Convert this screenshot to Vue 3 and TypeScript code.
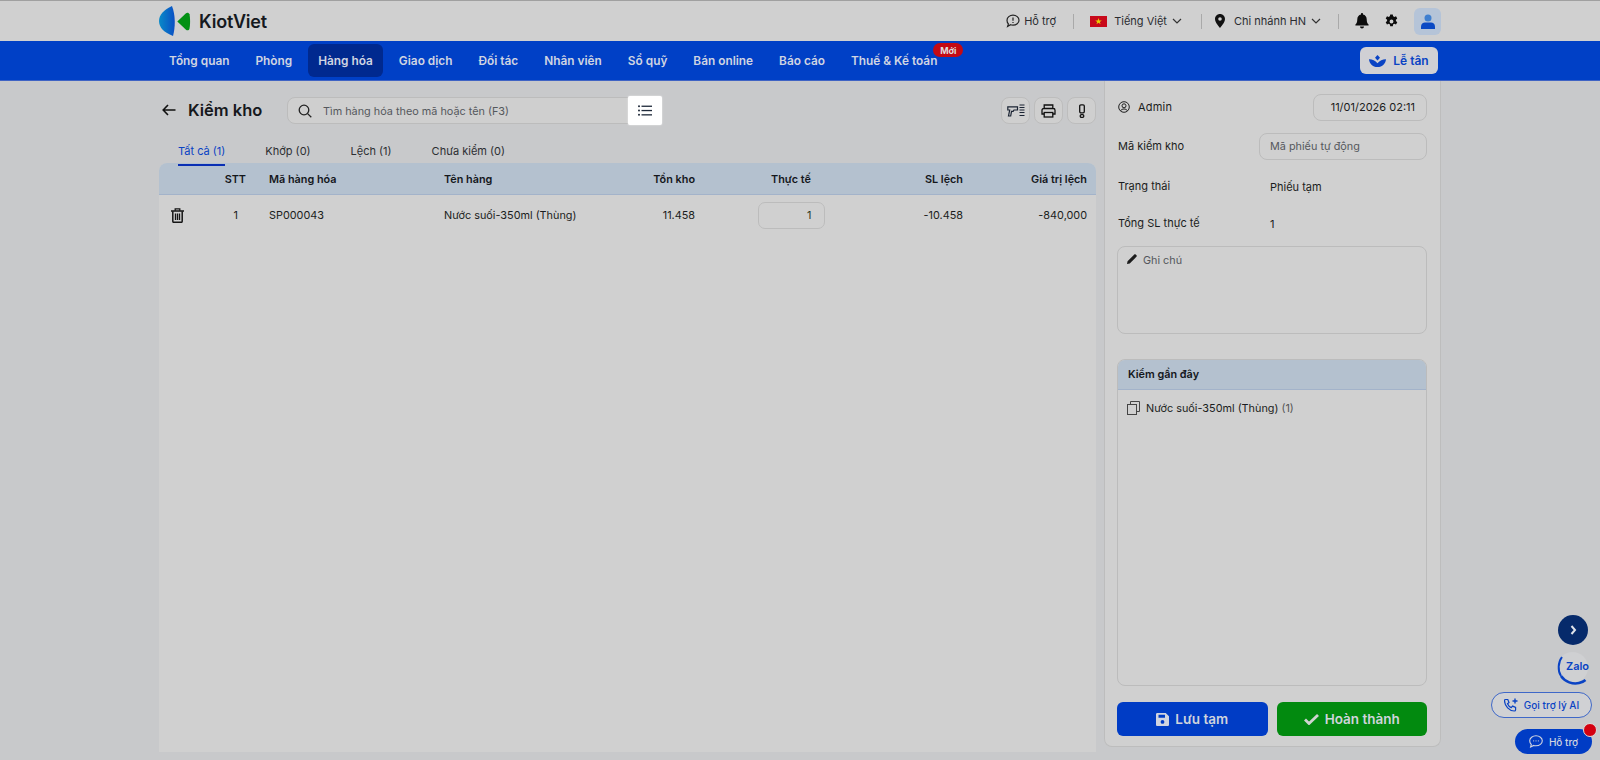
<script setup lang="ts">
const navItems = ['Tổng quan', 'Phòng', 'Hàng hóa', 'Giao dịch', 'Đối tác', 'Nhân viên', 'Sổ quỹ', 'Bán online', 'Báo cáo', 'Thuế & Kế toán']
const tabs = ['Tất cả (1)', 'Khớp (0)', 'Lệch (1)', 'Chưa kiểm (0)']
</script>

<template>
  <div class="page">
    <!-- top bar -->
    <header class="topbar">
      <div class="wrap topbar-inner">
        <div class="logo">
          <svg width="32" height="32" viewBox="0 0 32 32">
            <defs>
              <linearGradient id="lg" x1="0" y1="0" x2="1" y2="0">
                <stop offset="0" stop-color="#0a8ac8" />
                <stop offset="1" stop-color="#0a4fc4" />
              </linearGradient>
            </defs>
            <path d="M13 1C5 4.500 0 10 0 16c0 6.500 5 11.500 14 15 2.500-9 2.500-21-1-30z" fill="url(#lg)" />
            <path d="M18.300 16.500L27 8.300c1.200-1 3-.6 3.500 1 .8 4 .8 10.400 0 14.400-.5 1.600-2.300 2-3.500 1z" fill="#029014" />
          </svg>
          <span class="logo-text">KiotViet</span>
        </div>
        <div class="top-right">
          <div class="top-item support">
            <svg width="14" height="14" viewBox="0 0 14 14" fill="none" stroke="#222" stroke-width="1.200">
              <path d="M7 1.200c3.300 0 6 2.200 6 5s-2.700 5-6 5c-.9 0-1.700-.15-2.500-.45L1.600 12.500l.8-2.600C1.500 9 1 7.700 1 6.200c0-2.800 2.700-5 6-5z" />
              <path d="M7 3.500v3.300M7 8v1" />
            </svg>
            <span>Hỗ trợ</span>
          </div>
          <i class="sep"></i>
          <div class="top-item lang">
            <svg class="flag" width="17" height="11" viewBox="0 0 17 11">
              <rect width="17" height="11" fill="#c8091a" />
              <path d="M8.500 2l.8 2.400h2.500l-2 1.500.75 2.400-2.050-1.500-2.050 1.500.75-2.400-2-1.500h2.500z" fill="#e8d000" />
            </svg>
            <span>Tiếng Việt</span>
            <svg width="10" height="6" viewBox="0 0 10 6" fill="none" stroke="#333" stroke-width="1.200"><path d="M1 1l4 4 4-4" /></svg>
          </div>
          <i class="sep"></i>
          <div class="top-item branch">
            <svg width="10" height="14" viewBox="0 0 10 14">
              <path fill-rule="evenodd" d="M5 0C2.200 0 0 2.200 0 5c0 3.500 5 9 5 9s5-5.500 5-9c0-2.800-2.200-5-5-5zm0 3.200a1.800 1.800 0 110 3.600 1.800 1.800 0 010-3.600z" fill="#111" />
            </svg>
            <span>Chi nhánh HN</span>
            <svg width="10" height="6" viewBox="0 0 10 6" fill="none" stroke="#333" stroke-width="1.200"><path d="M1 1l4 4 4-4" /></svg>
          </div>
          <i class="sep"></i>
          <svg class="bell" width="14" height="16" viewBox="0 0 14 16">
            <path d="M7 0c-.6 0-1 .4-1 1v.6C3.700 2.100 2.300 4 2.300 6.200c0 3.100-.9 4.300-1.800 5.300-.4.400-.1 1 .4 1h12.200c.5 0 .8-.6.400-1-.9-1-1.800-2.200-1.800-5.300C11.700 4 10.300 2.100 8 1.600V1c0-.6-.4-1-1-1zM5 13.500c0 1.100.9 2 2 2s2-.9 2-2z" fill="#0c0c0c" />
          </svg>
          <svg class="gear" width="15" height="15" viewBox="0 0 14 14">
            <path fill-rule="evenodd" d="M5.800.5h2.400l.3 1.700c.4.150.8.350 1.100.6l1.600-.6 1.200 2.100-1.300 1.100a4.500 4.500 0 010 1.200l1.300 1.100-1.200 2.100-1.600-.6c-.3.250-.7.450-1.100.6l-.3 1.700H5.800l-.3-1.700a4.500 4.500 0 01-1.100-.6l-1.600.6-1.200-2.100 1.300-1.100a4.500 4.500 0 010-1.200L1.600 4.300l1.200-2.100 1.600.6c.3-.25.700-.45 1.100-.6zM7 5.200a1.800 1.800 0 100 3.600 1.800 1.800 0 000-3.600z" fill="#0c0c0c" />
          </svg>
          <div class="avatar">
            <svg width="14" height="15" viewBox="0 0 14 15">
              <circle cx="7" cy="4" r="3.500" fill="#3f7fd0" />
              <path d="M0 15v-2.500C0 10 2 8.500 4 8.500h6c2 0 4 1.500 4 4V15z" fill="#0a49c4" />
            </svg>
          </div>
        </div>
      </div>
    </header>

    <!-- main nav -->
    <nav class="mainnav">
      <div class="wrap nav-inner">
        <div class="nav-list">
          <a v-for="item in navItems" :key="item" class="nav-item" :class="{ active: item === 'Hàng hóa' }">
            {{ item }}
            <span v-if="item === 'Thuế & Kế toán'" class="badge-new">Mới</span>
          </a>
        </div>
        <button class="reception">
          <svg width="17" height="12" viewBox="0 0 17 12">
            <path d="M8.500 0l2.500 2.700-2.500 2.800L6 2.700z" fill="#0a43c4" />
            <path d="M0 4.200c2.800-.2 6.200 1.300 8.500 4 2.300-2.700 5.700-4.200 8.500-4-.3 4.200-3.600 7.800-8.500 7.800S.3 8.400 0 4.200z" fill="#0a43c4" />
          </svg>
          <span>Lễ tân</span>
        </button>
      </div>
    </nav>

    <div class="wrap content">
      <!-- left column -->
      <main class="left">
        <div class="toolbar">
          <svg class="back" width="14" height="12" viewBox="0 0 14 12" fill="none" stroke="#111" stroke-width="1.600">
            <path d="M13.500 6H1.500M6 1L1.200 6 6 11" />
          </svg>
          <h1 class="title">Kiểm kho</h1>
          <div class="search">
            <svg width="14" height="14" viewBox="0 0 14 14" fill="none" stroke="#222" stroke-width="1.300">
              <circle cx="6" cy="6" r="4.800" /><path d="M9.600 9.600L13.300 13.300" />
            </svg>
            <span>Tìm hàng hóa theo mã hoặc tên (F3)</span>
            <div class="list-btn">
              <svg width="14" height="11" viewBox="0 0 14 11" fill="#1f2a3a">
                <circle cx="1" cy="1.200" r="1" /><circle cx="1" cy="5.500" r="1" /><circle cx="1" cy="9.800" r="1" />
                <rect x="3.500" y=".6" width="10.500" height="1.300" /><rect x="3.500" y="4.900" width="10.500" height="1.300" /><rect x="3.500" y="9.200" width="10.500" height="1.300" />
              </svg>
            </div>
          </div>
          <div class="tools">
            <button class="tool">
              <svg width="18" height="14" viewBox="0 0 18 14" fill="none" stroke="#1a2333" stroke-width="1.200">
                <path d="M.8 2.800h9.700v3.200H7l-.9 1.400H4.500L3.700 12H1.500l1.200-6H.8z" />
                <path d="M12.500 1h5M12.500 3.500h5M12.500 6h5M12.500 8.500h5M12.500 11.500h5" stroke-width="1" />
              </svg>
            </button>
            <button class="tool">
              <svg width="15" height="14" viewBox="0 0 15 14" fill="none" stroke="#111" stroke-width="1.300">
                <path d="M3.200 4.500V1h8.600v3.500M3.200 10H1V6.200c0-.9.800-1.700 1.700-1.700h9.600c.9 0 1.700.8 1.700 1.700V10h-2.200" />
                <rect x="3.200" y="8.500" width="8.600" height="4.500" />
              </svg>
            </button>
            <button class="tool">
              <svg width="8" height="14" viewBox="0 0 8 14" fill="none" stroke="#111" stroke-width="1.300">
                <rect x="1.700" y=".8" width="4.600" height="8" rx="1.200" />
                <rect x="2.200" y="10.700" width="3.600" height="2.600" rx="1.200" />
              </svg>
            </button>
          </div>
        </div>

        <div class="tabs">
          <a v-for="(tab, i) in tabs" :key="tab" class="tab" :class="{ on: i === 0 }">{{ tab }}</a>
        </div>

        <section class="table">
          <div class="tr head">
            <span></span>
            <span class="r">STT</span>
            <span>Mã hàng hóa</span>
            <span>Tên hàng</span>
            <span class="r">Tồn kho</span>
            <span class="c">Thực tế</span>
            <span class="r">SL lệch</span>
            <span class="r">Giá trị lệch</span>
          </div>
          <div class="tr row">
            <span class="trash">
              <svg width="13" height="15" viewBox="0 0 13 15" fill="none" stroke="#151515" stroke-width="1.300">
                <path d="M0 3h13" stroke-width="1.500" />
                <path d="M4.200 2.800V.8h4.600v2" />
                <path d="M1.800 3.200v10.100c0 .6.400 1 1 1h7.400c.6 0 1-.4 1-1V3.200" stroke-width="1.500" />
                <path d="M4.500 5.500v6.500M6.500 5.500v6.500M8.500 5.500v6.500" />
              </svg>
            </span>
            <span class="r stt">1</span>
            <span>SP000043</span>
            <span>Nước suối-350ml (Thùng)</span>
            <span class="r">11.458</span>
            <span class="c"><span class="qty">1</span></span>
            <span class="r">-10.458</span>
            <span class="r">-840,000</span>
          </div>
        </section>
      </main>

      <!-- right panel -->
      <aside class="panel">
        <div class="line admin">
          <div class="who">
            <svg width="12" height="12" viewBox="0 0 12 12" fill="none" stroke="#222" stroke-width="1">
              <circle cx="6" cy="6" r="5.300" /><circle cx="6" cy="4.800" r="2" /><path d="M2.500 9.800C3.300 8.500 4.500 8 6 8s2.700.5 3.500 1.800" />
            </svg>
            <span>Admin</span>
          </div>
          <div class="field date">11/01/2026 02:11</div>
        </div>
        <div class="line code">
          <label>Mã kiểm kho</label>
          <div class="field ph">Mã phiếu tự động</div>
        </div>
        <div class="line status">
          <label>Trạng thái</label>
          <span class="val">Phiếu tạm</span>
        </div>
        <div class="line total">
          <label>Tổng SL thực tế</label>
          <span class="val">1</span>
        </div>
        <div class="note">
          <svg width="10" height="10" viewBox="0 0 11 11"><path d="M0 11l.6-3L7.200 1.400l2.400 2.400L3 10.400zM8 .6c.5-.5 1.100-.5 1.500-.1l1 1c.4.400.4 1-.1 1.500l-.9.900L7.100 1.500z" fill="#1c1c1c" /></svg>
          <span>Ghi chú</span>
        </div>
        <section class="recent">
          <div class="recent-head">Kiểm gần đây</div>
          <div class="recent-item">
            <svg width="13" height="14" viewBox="0 0 13 14" fill="none" stroke="#444" stroke-width="1">
              <rect x=".5" y="3.500" width="9" height="10" /><path d="M3.500 3.500V.5h9v10h-3" />
            </svg>
            <span>Nước suối-350ml (Thùng)</span>
            <span class="count">(1)</span>
          </div>
        </section>
        <div class="actions">
          <button class="act save">
            <svg width="13" height="13" viewBox="0 0 13 13">
              <path fill-rule="evenodd" d="M1.300 0h8.400L13 3.300v8.400c0 .7-.6 1.300-1.300 1.300H1.300C.6 13 0 12.400 0 11.700V1.300C0 .6.600 0 1.300 0zM2.500 1.800v3h6.500v-3zM6.500 7a1.900 1.900 0 100 3.800 1.900 1.900 0 000-3.800z" fill="#d0d4e0" />
            </svg>
            Lưu tạm
          </button>
          <button class="act done">
            <svg width="15" height="11" viewBox="0 0 15 11" fill="none" stroke="#d0d4d0" stroke-width="2.800"><path d="M1 5.500l4 4 9-8.500" /></svg>
            Hoàn thành
          </button>
        </div>
      </aside>
    </div>

    <!-- floating widgets -->
    <div class="floats">
      <button class="fold">
        <svg width="7" height="10" viewBox="0 0 7 10" fill="none" stroke="#dfe3ea" stroke-width="2"><path d="M1.500 1l3.500 4-3.500 4" /></svg>
      </button>
      <div class="zalo">
        <svg class="zalo-ring" width="32" height="32" viewBox="0 0 32 32" fill="none" stroke="#0a43c4">
          <path d="M5 4C1 9 .5 18 4 23" stroke-width="2" />
          <path d="M4 23c4 6 12 8.500 18 7 3-.7 5-1.700 6.500-3" stroke-width="2.500" />
        </svg>
        <span>Zalo</span>
      </div>
      <button class="ai">
        <svg width="15" height="15" viewBox="0 0 15 15" fill="none" stroke="#0a43c4" stroke-width="1.200">
          <path d="M1.500 1.500h2.300l1.200 3-1.500 1.200c.7 1.700 2 3.100 3.800 3.900l1.300-1.500 3 1.300v2.300c0 .7-.6 1.300-1.300 1.300C5.500 13 .5 8 .5 2.500c0-.6.400-1 1-1z" />
          <path d="M11 .5v5M8.500 3h5" stroke-width="1.400" />
        </svg>
        Gọi trợ lý AI
      </button>
      <button class="help">
        <svg width="14" height="13" viewBox="0 0 14 13" fill="none" stroke="#d0d4e0" stroke-width="1.100">
          <path d="M7 .8c3.400 0 6.300 2.100 6.300 5s-2.900 5-6.300 5c-.8 0-1.600-.1-2.300-.35L1.600 12l.7-2.500C1.300 8.600.7 7.300.7 5.800c0-2.900 2.900-5 6.300-5z" />
          <path d="M4.300 5.800h.8M6.600 5.800h.8M8.900 5.800h.8" stroke-width="1.300" />
        </svg>
        Hỗ trợ
        <i class="dot"></i>
      </button>
    </div>
  </div>
</template>

<style>
html, body { margin: 0; background: #c8c9cb; overflow: hidden; }
</style>

<style scoped>
.page {
  position: relative;
  height: 760px;
  overflow: hidden;
  background: #c8c9cb;
  color: #1b1d20;
  font-family: Inter, "Noto Sans", "Liberation Sans", sans-serif;
  font-size: 11px;
}
.wrap { width: 1282px; margin: 0 auto; }
button { font-family: inherit; border: 0; padding: 0; cursor: pointer; }

.topbar { height: 41px; box-sizing: border-box; background: #d0d0d0; border-top: 1px solid #a0a0a0; }
.topbar-inner { display: flex; align-items: center; justify-content: space-between; height: 40px; }
.logo { display: flex; align-items: center; gap: 8px; }
.logo-text { font-size: 18px; font-weight: 600; color: #15191e; letter-spacing: -0.2px; }
.top-right { display: flex; align-items: center; color: #2a2c30; }
.top-item { display: flex; align-items: center; }
.support { gap: 4px; }
.lang { gap: 7px; margin: 0 2px 0 -1px; }
.lang svg:last-child { margin-left: -2px; }
.branch { gap: 4px; margin-left: -4px; }
.branch > svg:first-child { margin-right: 5px; }
.branch svg:last-child { margin-left: 1px; }
.sep { width: 1px; height: 15px; background: #a9a9a9; margin: 0 17px; }
.bell { margin-left: -1px; }
.gear { margin-left: 15px; }
.avatar {
  width: 27px; height: 27px; margin-left: 15px; border-radius: 6px; background: #b5c4d8;
  display: flex; align-items: center; justify-content: center;
}

.mainnav { height: 40px; background: #0040c6; border-bottom: 1px solid #3f63c4; box-sizing: border-box; }
.nav-inner { display: flex; align-items: center; justify-content: space-between; height: 39px; }
.nav-list { display: flex; gap: 6px; }
.nav-item {
  position: relative;
  display: flex; align-items: center;
  height: 33px; padding: 0 10px; border-radius: 6px;
  color: #d0d5e2; font-size: 11.85px; font-weight: 600;
}
.nav-item.active { background: #00298f; }
.badge-new {
  position: absolute; top: -1px; right: -16px;
  width: 30px; height: 14px; border-radius: 7px;
  background: #c40a14; color: #ddd; font-size: 9px; font-weight: 700;
  display: flex; align-items: center; justify-content: center;
}
.reception {
  width: 78px; height: 27px; margin-right: 3px; border-radius: 6px; background: #d0d0d4;
  color: #0a43c4; font-size: 12px; font-weight: 600;
  display: flex; align-items: center; justify-content: center; gap: 7px;
}

.content { display: flex; gap: 8px; height: 679px; }
.left { width: 937px; display: flex; flex-direction: column; }
.toolbar { display: flex; align-items: center; height: 29px; margin-top: 15px; }
.back { margin: -2px 0 0 3px; }
.title { margin: -2px 0 0 12px; width: 99px; font-size: 16.5px; font-weight: 600; color: #16181c; }
.search {
  position: relative;
  display: flex; align-items: center; gap: 11px;
  width: 375px; height: 27px; box-sizing: border-box; padding-left: 10px;
  border: 1px solid #bcbcbc; border-radius: 8px; background: #cfcfcf;
  color: #55585d; font-size: 10.85px;
}
.search > svg { flex: none; }
.list-btn {
  position: absolute; top: -2px; right: -1px;
  width: 34px; height: 29px; background: #fff; border-radius: 2px;
  box-shadow: 0 0 2px rgba(255, 255, 255, 0.7);
  display: flex; align-items: center; justify-content: center;
}
.tools { display: flex; gap: 4px; margin-left: auto; }
.tool {
  width: 29px; height: 27px; box-sizing: border-box;
  border: 1px solid #bdbdbd; border-radius: 8px; background: #cfcfcf;
  display: flex; align-items: center; justify-content: center;
}
.tabs { display: flex; gap: 40px; padding-left: 19px; margin-top: 17px; height: 22px; box-sizing: border-box; position: relative; z-index: 1; }
.tab { height: 24px; line-height: 18px; box-sizing: border-box; color: #2c2e32; }
.tab.on { color: #0a43c4; border-bottom: 2px solid #0a2fb4; }

.table { flex: 1; margin: -1px 0 8px; background: #d0d0d0; border-radius: 8px 8px 0 0; overflow: hidden; font-size: 10.85px; }
.tr {
  display: grid;
  grid-template-columns: 44px 43px 174px 180px 95px 192px 76px 124px;
  align-items: center;
  padding-right: 9px;
}
.tr > span:nth-child(3) { padding-left: 23px; }
.tr > span:nth-child(4) { padding-left: 24px; }
.head { height: 32px; background: #b4c1cf; border-bottom: 1px solid #a3b3ca; box-sizing: border-box; font-weight: 600; color: #14171c; }
.row { height: 40px; }
.r { text-align: right; }
.c { text-align: center; }
.stt { padding-right: 8px; }
.trash { padding-left: 12px; display: flex; }
.qty {
  display: block; width: 67px; height: 27px; line-height: 25px; box-sizing: border-box; margin: 0 auto;
  padding-right: 12px; text-align: right;
  border: 1px solid #bcbcbc; border-radius: 7px; color: #2b3a1f;
}

.panel {
  width: 337px; height: 666px; box-sizing: border-box; padding: 13px 13px 10px 12px;
  background: #d0d0d0; border: 1px solid #bdbdbd; border-top: 0; border-radius: 0 0 8px 8px;
  display: flex; flex-direction: column;
}
.line { display: flex; align-items: center; }
.admin { justify-content: space-between; height: 27px; }
.who { display: flex; align-items: center; gap: 8px; padding-left: 1px; margin-top: -2px; letter-spacing: 0.2px; }
.field {
  box-sizing: border-box; height: 27px; line-height: 25px;
  border: 1px solid #bcbcbc; border-radius: 8px;
}
.date { width: 114px; text-align: right; padding-right: 11px; }
.code { margin-top: 12px; height: 27px; justify-content: space-between; }
.ph { width: 168px; padding-left: 10px; color: #55585d; font-size: 10.85px; }
.status { margin-top: 13px; height: 26px; }
.total { margin-top: 11px; height: 26px; }
.line label { width: 153px; flex: none; padding-left: 1px; box-sizing: border-box; }
.code label { width: auto; margin-top: -2px; }
.val { margin-top: 2px; }
.note {
  margin-top: 10px; height: 88px; flex: none; box-sizing: border-box; padding: 7px 9px;
  border: 1px solid #bcbcbc; border-radius: 8px; color: #55585d; font-size: 10.8px;
  display: flex; align-items: flex-start; gap: 6px;
}
.recent {
  margin-top: 25px; flex: 1;
  border: 1px solid #bcbcbc; border-radius: 8px; overflow: hidden;
  font-size: 10.85px;
}
.recent-head {
  height: 29px; line-height: 29px; padding-left: 10px;
  background: #b4c1cf; border-bottom: 1px solid #a3b3ca; box-sizing: content-box;
  font-weight: 600; color: #14171c;
}
.recent-item { display: flex; align-items: center; gap: 6px; padding: 11px 0 0 9px; }
.count { color: #555; margin-left: -3px; }
.actions { display: flex; gap: 9px; margin-top: 16px; }
.act {
  flex: 1; height: 34px; border-radius: 6px;
  color: #d0d4dc; font-size: 13.5px; font-weight: 600;
  display: flex; align-items: center; justify-content: center; gap: 6px;
}
.save { background: #003cc5; }
.done { background: #028a0f; }

/* floating widgets sit over the page */
.floats {
  position: absolute; right: 8px; bottom: 6px;
  display: flex; flex-direction: column; align-items: flex-end;
}
.fold {
  width: 30px; height: 30px; margin-right: 4px; border-radius: 50%; background: #062a6b;
  display: flex; align-items: center; justify-content: center;
}
.zalo {
  position: relative;
  width: 31px; height: 31px; margin: 7px 4px 0 0; border-radius: 50%; background: #cfd0d2;
  color: #0a43c4; font-size: 11px; font-weight: 600; line-height: 28px; white-space: nowrap;
}
.zalo span { position: absolute; left: 9px; top: 0; }
.zalo-ring { position: absolute; left: 0; top: 1px; }
.ai {
  width: 101px; height: 26px; margin-top: 9px; box-sizing: border-box; border-radius: 13px;
  border: 1px solid #3f68c8; background: #d0d1d4; color: #0a43c4; font-size: 10px; font-weight: 500;
  display: flex; align-items: center; justify-content: center; gap: 5px;
}
.help {
  position: relative;
  width: 77px; height: 25px; margin-top: 11px; border-radius: 13px; background: #003cc5;
  color: #d0d4e0; font-size: 10px; font-weight: 500;
  display: flex; align-items: center; justify-content: center; gap: 6px;
}
.dot {
  position: absolute; right: -5px; top: -6px;
  width: 14px; height: 14px; box-sizing: border-box; border-radius: 50%;
  background: #d40010; border: 1px solid #ddd;
}
</style>
